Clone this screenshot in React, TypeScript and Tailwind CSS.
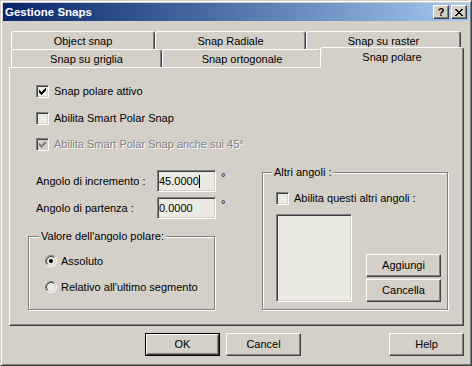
import React from "react";

const raised =
  "border border-t-white border-l-white border-r-[#404040] border-b-[#404040] shadow-[inset_-1px_-1px_0_#808080]";
const sunken =
  "border border-t-[#808080] border-l-[#808080] border-r-white border-b-white shadow-[inset_1px_1px_0_#404040,inset_-1px_-1px_0_#D4D0C8]";

function CheckMark({ color }: { color: string }) {
  const starts = [2, 3, 4, 3, 2, 1, 0];
  return (
    <svg width="13" height="13" className="absolute -top-px -left-px" shapeRendering="crispEdges">
      {starts.map((s, i) => (
        <rect key={i} x={3 + i} y={3 + s} width="1" height="3" fill={color} />
      ))}
    </svg>
  );
}

function CheckBox({ checked, disabled }: { checked?: boolean; disabled?: boolean }) {
  return (
    <div
      className={`relative w-[13px] h-[13px] shrink-0 ${sunken} ${
        disabled ? "bg-[#D4D0C8]" : "bg-[#EBEAE3]"
      }`}
    >
      {checked ? <CheckMark color={disabled ? "#808080" : "#000"} /> : null}
    </div>
  );
}

function Radio({ checked }: { checked?: boolean }) {
  return (
    <svg width="12" height="12" className="shrink-0">
      <circle cx="6" cy="6" r="4.5" fill="#EBEAE3" />
      <path d="M2.11 9.89 A5.5 5.5 0 0 1 9.89 2.11" fill="none" stroke="#808080" />
      <path d="M9.89 2.11 A5.5 5.5 0 0 1 2.11 9.89" fill="none" stroke="#ffffff" />
      <path d="M2.82 9.18 A4.5 4.5 0 0 1 9.18 2.82" fill="none" stroke="#404040" />
      <path d="M9.18 2.82 A4.5 4.5 0 0 1 2.82 9.18" fill="none" stroke="#D4D0C8" />
      {checked ? <circle cx="6" cy="6" r="2" fill="#000" /> : null}
    </svg>
  );
}

function Tab({ label, width, selected }: { label: string; width: string; selected?: boolean }) {
  return (
    <div
      className={`${width} shrink-0 flex justify-center pt-[3px] bg-[#D4D0C8] rounded-t-[3px] border-t border-l border-r border-t-white border-l-white border-r-[#404040] shadow-[inset_-1px_0_0_#808080] ${
        selected ? "relative z-10 h-[21px] -mt-[2px] -ml-[2px]" : "h-[18px]"
      }`}
    >
      {label}
    </div>
  );
}

function Button({ label, def, width = "w-[75px]" }: { label: string; def?: boolean; width?: string }) {
  if (def) {
    return (
      <div className={`${width} h-[23px] border border-black`}>
        <div className={`w-full h-full flex items-center justify-center ${raised}`}>{label}</div>
      </div>
    );
  }
  return <div className={`${width} h-[23px] flex items-center justify-center ${raised}`}>{label}</div>;
}

function GroupBox({
  label,
  labelLeft,
  className,
  children,
}: {
  label: string;
  labelLeft: string;
  className: string;
  children: React.ReactNode;
}) {
  return (
    <div className={`relative shrink-0 border border-[#808080] shadow-[1px_1px_0_#fff,inset_1px_1px_0_#fff] ${className}`}>
      <div className={`absolute -top-[7px] ${labelLeft} px-[2px] bg-[#D4D0C8]`}>{label}</div>
      {children}
    </div>
  );
}

export default function App() {
  return (
    <div className="w-[472px] h-[366px] bg-[#D4D0C8] p-[2px] border border-t-[#D4D0C8] border-l-[#D4D0C8] border-r-[#404040] border-b-[#404040] shadow-[inset_1px_1px_0_#fff,inset_-1px_-1px_0_#808080] font-['Liberation_Sans',Arial,sans-serif] text-[11px] leading-[13px] text-black select-none">
      <div className="flex flex-col w-full h-full">
        {/* title bar */}
        <div className="h-[18px] flex items-center bg-linear-to-r from-[#0A246A] to-[#A6CAF0] pl-[2px] pr-[2px]">
          <span className="text-white font-bold text-[11.5px]">Gestione Snaps</span>
          <div className="ml-auto flex gap-[2px]">
            <div className={`w-[16px] h-[14px] bg-[#D4D0C8] flex items-center justify-center font-bold text-[11px] leading-none ${raised}`}>
              ?
            </div>
            <div className={`w-[16px] h-[14px] bg-[#D4D0C8] flex items-center justify-center ${raised}`}>
              <svg width="8" height="7" shapeRendering="crispEdges">
                {[0, 1, 2, 4, 5, 6].map((r) => {
                  const d = Math.min(r, 6 - r);
                  return (
                    <g key={r}>
                      <rect x={d} y={r} width="2" height="1" fill="#000" />
                      <rect x={6 - d} y={r} width="2" height="1" fill="#000" />
                    </g>
                  );
                })}
                <rect x="3" y="3" width="2" height="1" fill="#000" />
              </svg>
            </div>
          </div>
        </div>

        {/* tabs */}
        <div className="mt-[10px] ml-[8px] flex h-[18px]">
          <Tab label="Object snap" width="w-[144px]" />
          <Tab label="Snap Radiale" width="w-[151px]" />
          <Tab label="Snap su raster" width="w-[155px]" />
        </div>
        <div className="ml-[8px] flex items-start h-[18px]">
          <Tab label="Snap su griglia" width="w-[151px]" />
          <Tab label="Snap ortogonale" width="w-[160px]" />
          <Tab label="Snap polare" width="w-[144px]" selected />
        </div>

        {/* panel */}
        <div className={`ml-[6px] w-[455px] h-[259px] pt-[17px] ${raised}`}>
          <div className="pl-[26px] flex flex-col">
            <div className="h-[13px] flex items-center gap-[5px]">
              <CheckBox checked />
              <span>Snap polare attivo</span>
            </div>
            <div className="mt-[14px] h-[13px] flex items-center gap-[5px]">
              <CheckBox />
              <span>Abilita Smart Polar Snap</span>
            </div>
            <div className="mt-[13px] h-[13px] flex items-center gap-[5px]">
              <CheckBox checked disabled />
              <span className="text-[#808080] [text-shadow:1px_1px_0_#fff]">
                Abilita Smart Polar Snap anche sui 45°
              </span>
            </div>
          </div>

          <div className="mt-[19px] pl-[18px] flex items-start">
            {/* left column */}
            <div className="w-[188px] shrink-0 flex flex-col">
              <div className="pl-[8px] flex items-center h-[22px]">
                <span className="w-[121px] shrink-0">Angolo di incremento :</span>
                <div className={`w-[59px] h-[22px] shrink-0 pl-[1px] flex items-center bg-[#EBEAE3] ${sunken}`}>
                  <span>45.0000</span>
                  <span className="w-px h-[13px] bg-black" />
                </div>
                <span className="ml-[5px] -mt-[7px] shrink-0">°</span>
              </div>
              <div className="mt-[5px] pl-[8px] flex items-center h-[22px]">
                <span className="w-[121px] shrink-0">Angolo di partenza :</span>
                <div className={`w-[59px] h-[22px] shrink-0 pl-[1px] flex items-center bg-[#EBEAE3] ${sunken}`}>
                  <span>0.0000</span>
                </div>
                <span className="ml-[5px] -mt-[7px] shrink-0">°</span>
              </div>
              <GroupBox
                label="Valore dell'angolo polare:"
                labelLeft="left-[10px]"
                className="mt-[17px] w-[187px] h-[74px] pt-[18px] pl-[16px]"
              >
                <div className="h-[12px] flex items-center gap-[4px]">
                  <Radio checked />
                  <span>Assoluto</span>
                </div>
                <div className="mt-[14px] h-[12px] flex items-center gap-[4px]">
                  <Radio />
                  <span>Relativo all'ultimo segmento</span>
                </div>
              </GroupBox>
            </div>

            {/* right group */}
            <GroupBox
              label="Altri angoli :"
              labelLeft="left-[9px]"
              className="ml-[46px] mt-[2px] w-[186px] h-[138px] pt-[19px] pl-[13px]"
            >
              <div className="h-[13px] flex items-center gap-[5px]">
                <CheckBox />
                <span>Abilita questi altri angoli :</span>
              </div>
              <div className="mt-[9px] flex items-end">
                <div className={`w-[76px] h-[88px] bg-[#EBEAE3] ${sunken}`} />
                <div className="ml-[14px] flex flex-col gap-[2px]">
                  <Button label="Aggiungi" />
                  <Button label="Cancella" />
                </div>
              </div>
            </GroupBox>
          </div>
        </div>

        {/* bottom buttons */}
        <div className="mt-[7px] flex pr-[5px]">
          <div className="ml-[142px]">
            <Button label="OK" def />
          </div>
          <div className="ml-[6px]">
            <Button label="Cancel" />
          </div>
          <div className="ml-auto">
            <Button label="Help" />
          </div>
        </div>
      </div>
    </div>
  );
}
